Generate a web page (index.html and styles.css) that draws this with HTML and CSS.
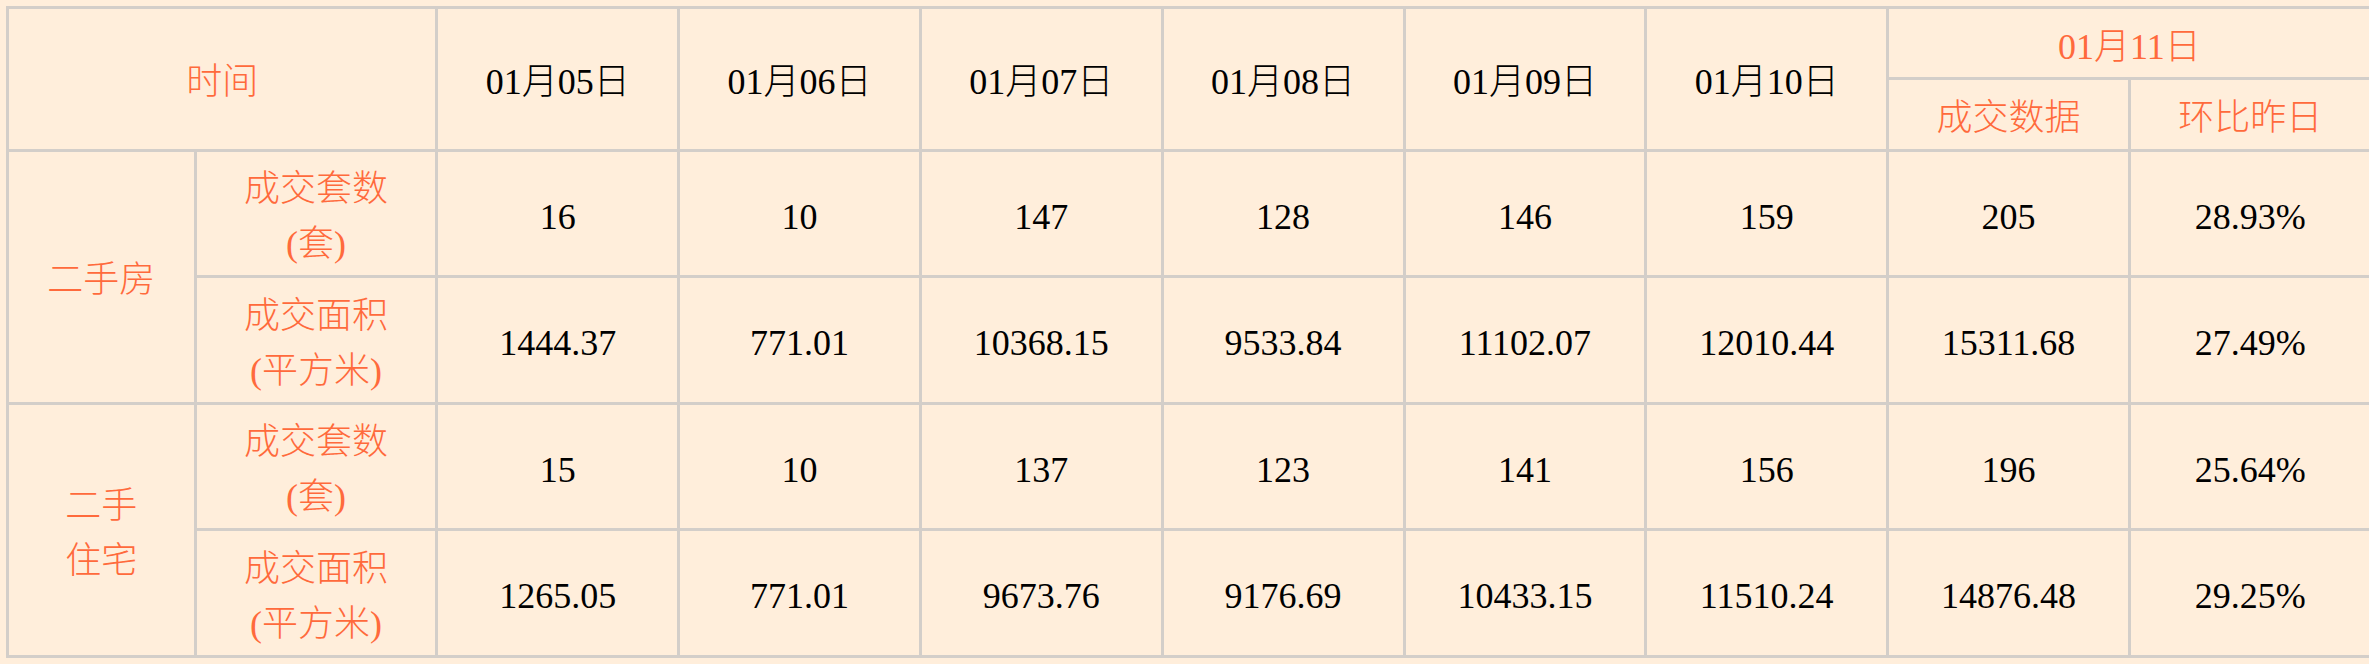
FILE: index.html
```html
<!DOCTYPE html>
<html lang="zh-CN">
<head>
<meta charset="utf-8">
<title>二手房成交数据</title>
<link rel="stylesheet" href="styles.css">
</head>
<body>
<table class="deal-table">
  <colgroup>
    <col class="col-type">
    <col class="col-metric">
    <col class="col-day">
    <col class="col-day">
    <col class="col-day">
    <col class="col-day">
    <col class="col-day">
    <col class="col-day">
    <col class="col-day">
    <col class="col-day">
  </colgroup>
  <thead>
    <tr class="head-row-1">
      <th class="label" colspan="2" rowspan="2">时间</th>
      <th rowspan="2">01月05日</th>
      <th rowspan="2">01月06日</th>
      <th rowspan="2">01月07日</th>
      <th rowspan="2">01月08日</th>
      <th rowspan="2">01月09日</th>
      <th rowspan="2">01月10日</th>
      <th class="label" colspan="2">01月11日</th>
    </tr>
    <tr class="head-row-2">
      <th class="label">成交数据</th>
      <th class="label">环比昨日</th>
    </tr>
  </thead>
  <tbody>
    <tr class="body-row">
      <td class="label" rowspan="2">二手房</td>
      <td class="label">成交套数<br>(套)</td>
      <td>16</td>
      <td>10</td>
      <td>147</td>
      <td>128</td>
      <td>146</td>
      <td>159</td>
      <td>205</td>
      <td>28.93%</td>
    </tr>
    <tr class="body-row">
      <td class="label">成交面积<br>(平方米)</td>
      <td>1444.37</td>
      <td>771.01</td>
      <td>10368.15</td>
      <td>9533.84</td>
      <td>11102.07</td>
      <td>12010.44</td>
      <td>15311.68</td>
      <td>27.49%</td>
    </tr>
    <tr class="body-row">
      <td class="label" rowspan="2">二手<br>住宅</td>
      <td class="label">成交套数<br>(套)</td>
      <td>15</td>
      <td>10</td>
      <td>137</td>
      <td>123</td>
      <td>141</td>
      <td>156</td>
      <td>196</td>
      <td>25.64%</td>
    </tr>
    <tr class="body-row">
      <td class="label">成交面积<br>(平方米)</td>
      <td>1265.05</td>
      <td>771.01</td>
      <td>9673.76</td>
      <td>9176.69</td>
      <td>10433.15</td>
      <td>11510.24</td>
      <td>14876.48</td>
      <td>29.25%</td>
    </tr>
  </tbody>
</table>
</body>
</html>
```

FILE: styles.css
```css
html, body {
  margin: 0;
  background: #ffeedb;
}

body {
  padding: 6px 0 0 6px;
  overflow: hidden;
  font-family: "Liberation Serif", "Noto Sans CJK SC", serif;
  font-size: 36px;
  line-height: 55px;
  color: #000;
}

.deal-table {
  table-layout: fixed;
  border-collapse: collapse;
  width: 2366.7px;
  background: #ffeedb;
}

.col-type { width: 187.5px; }
.col-metric,
.col-day { width: 241.8px; }

.deal-table th,
.deal-table td {
  border: 3px solid #d3cec9;
  padding: 8px 4px 0;
  text-align: center;
  vertical-align: middle;
  font-weight: 300;
  white-space: nowrap;
}

.deal-table .label {
  color: #ff6a3c;
}

.head-row-1 { height: 71px; }
.head-row-2 { height: 71.5px; }
.body-row { height: 126.5px; }
```
